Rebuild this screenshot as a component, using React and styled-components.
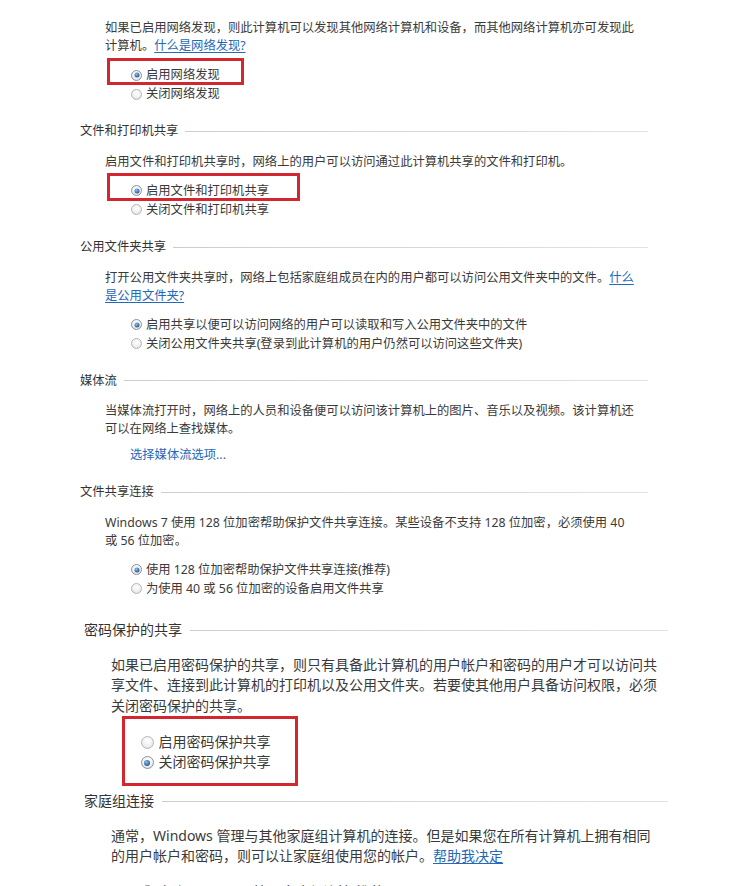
import React from "react";
import styled, { createGlobalStyle, ThemeProvider } from "styled-components";

const GlobalStyle = createGlobalStyle`
  html, body { margin: 0; padding: 0; background: #ffffff; }
  body {
    font-family: "Noto Sans", "Noto Sans CJK SC", sans-serif;
    color: #3a3a3a;
    -webkit-font-smoothing: antialiased;
  }
`;

const compact = {
  font: 12.3, line: 18, row: 19, left: 80, end: 648, bodyIndent: 25, bodyWidth: 530.5,
  optionIndent: 51, radio: 11, dot: 5, radioGap: 4, headToBody: 12.5, bodyToOptions: 10.5,
  linkSpace: 7, sectionGap: 16.5, top: 19, headerGap: 7,
};

const large = {
  font: 14, line: 20.5, row: 20, left: 84, end: 668, bodyIndent: 27, bodyWidth: 550,
  optionIndent: 56.5, radio: 13, dot: 6, radioGap: 5, headToBody: 14, bodyToOptions: 15,
  linkSpace: 11, sectionGap: 18.75, top: 22.25, headerGap: 8,
};

const Page = styled.main`
  width: 732px;
  height: 886px;
  overflow: hidden;
  background: #ffffff;
`;

const Group = styled.div`
  margin-left: ${(p) => p.theme.left}px;
  width: ${(p) => p.theme.end - p.theme.left}px;
  padding-top: ${(p) => p.theme.top}px;
  font-size: ${(p) => p.theme.font}px;
  line-height: ${(p) => p.theme.line}px;
`;

const Section = styled.section`
  & + & { margin-top: ${(p) => p.theme.sectionGap}px; }
`;

const Header = styled.h3`
  margin: 0 0 ${(p) => p.theme.headToBody}px 0;
  display: flex;
  align-items: center;
  gap: ${(p) => p.theme.headerGap}px;
  font-size: inherit;
  line-height: inherit;
  font-weight: normal;
  color: #333333;
  white-space: nowrap;
  &::after {
    content: "";
    flex: 1;
    height: 1px;
    background: linear-gradient(to right, #cdcdcd, #e2e2e2);
  }
`;

const Body = styled.p`
  margin: 0;
  padding-left: ${(p) => p.theme.bodyIndent}px;
  max-width: ${(p) => p.theme.bodyWidth}px;
  color: #3a3a3a;
`;

const Link = styled.a`
  color: #2468b8;
  text-decoration: ${(p) => (p.$plain ? "none" : "underline")};
  text-underline-offset: 2px;
  cursor: pointer;
`;

const LinkRow = styled.div`
  margin-top: ${(p) => p.theme.linkSpace}px;
  padding-left: ${(p) => p.theme.optionIndent - 1}px;
  height: ${(p) => p.theme.row}px;
  line-height: ${(p) => p.theme.row}px;
`;

const Options = styled.div`
  margin-top: ${(p) => (p.$space != null ? p.$space : p.theme.bodyToOptions)}px;
  padding-left: ${(p) => p.theme.optionIndent}px;
  display: flex;
  flex-direction: column;
  align-items: flex-start;
`;

const Mark = styled.div`
  position: relative;
  display: flex;
  flex-direction: column;
  &::after {
    content: "";
    position: absolute;
    top: ${(p) => -p.$out[0]}px;
    right: ${(p) => -p.$out[1]}px;
    bottom: ${(p) => -p.$out[2]}px;
    left: ${(p) => -p.$out[3]}px;
    border: 3px solid #d3262e;
    pointer-events: none;
  }
`;

const Option = styled.label`
  display: flex;
  align-items: center;
  gap: ${(p) => p.theme.radioGap}px;
  height: ${(p) => p.theme.row}px;
  white-space: nowrap;
  color: #3a3a3a;
`;

const Radio = styled.span`
  position: relative;
  flex: none;
  width: ${(p) => p.theme.radio}px;
  height: ${(p) => p.theme.radio}px;
  box-sizing: border-box;
  border-radius: 50%;
  border: 1px solid ${(p) => (p.$on ? "#8d9399" : "#b4b6b8")};
  background: radial-gradient(circle at 50% 35%, #ffffff 0%, #eef0f2 55%, #d4d6d8 100%);
  &::after {
    content: "";
    display: ${(p) => (p.$on ? "block" : "none")};
    position: absolute;
    left: 50%;
    top: 50%;
    width: ${(p) => p.theme.dot}px;
    height: ${(p) => p.theme.dot}px;
    transform: translate(-50%, -50%);
    border-radius: 50%;
    background: radial-gradient(circle at 40% 35%, #8fc0ec 0%, #3f78b8 50%, #1d3f6e 100%);
  }
`;

const Choice = ({ on, children }) => (
  <Option>
    <Radio $on={on} />
    <span>{children}</span>
  </Option>
);

export default function App() {
  return (
    <Page>
      <GlobalStyle />
      <ThemeProvider theme={compact}>
        <Group>
          <Section>
            <Body>
              如果已启用网络发现，则此计算机可以发现其他网络计算机和设备，而其他网络计算机亦可发现此计算机。
              <Link>什么是网络发现?</Link>
            </Body>
            <Options>
              <Mark $out={[7.5, 24, 0.5, 24]}>
                <Choice on>启用网络发现</Choice>
              </Mark>
              <Choice>关闭网络发现</Choice>
            </Options>
          </Section>

          <Section>
            <Header>文件和打印机共享</Header>
            <Body>启用文件和打印机共享时，网络上的用户可以访问通过此计算机共享的文件和打印机。</Body>
            <Options>
              <Mark $out={[8, 31, 0.5, 24]}>
                <Choice on>启用文件和打印机共享</Choice>
              </Mark>
              <Choice>关闭文件和打印机共享</Choice>
            </Options>
          </Section>

          <Section>
            <Header>公用文件夹共享</Header>
            <Body>
              打开公用文件夹共享时，网络上包括家庭组成员在内的用户都可以访问公用文件夹中的文件。
              <Link>什么是公用文件夹?</Link>
            </Body>
            <Options>
              <Choice on>启用共享以便可以访问网络的用户可以读取和写入公用文件夹中的文件</Choice>
              <Choice>关闭公用文件夹共享(登录到此计算机的用户仍然可以访问这些文件夹)</Choice>
            </Options>
          </Section>

          <Section>
            <Header>媒体流</Header>
            <Body>当媒体流打开时，网络上的人员和设备便可以访问该计算机上的图片、音乐以及视频。该计算机还可以在网络上查找媒体。</Body>
            <LinkRow>
              <Link $plain>选择媒体流选项...</Link>
            </LinkRow>
          </Section>

          <Section>
            <Header>文件共享连接</Header>
            <Body>Windows 7 使用 128 位加密帮助保护文件共享连接。某些设备不支持 128 位加密，必须使用 40 或 56 位加密。</Body>
            <Options>
              <Choice on>使用 128 位加密帮助保护文件共享连接(推荐)</Choice>
              <Choice>为使用 40 或 56 位加密的设备启用文件共享</Choice>
            </Options>
          </Section>
        </Group>
      </ThemeProvider>

      <ThemeProvider theme={large}>
        <Group>
          <Section>
            <Header>密码保护的共享</Header>
            <Body>如果已启用密码保护的共享，则只有具备此计算机的用户帐户和密码的用户才可以访问共享文件、连接到此计算机的打印机以及公用文件夹。若要使其他用户具备访问权限，必须关闭密码保护的共享。</Body>
            <Options $space={16.25}>
              <Mark $out={[17, 27.5, 13, 18.5]}>
                <Choice>启用密码保护共享</Choice>
                <Choice on>关闭密码保护共享</Choice>
              </Mark>
            </Options>
          </Section>

          <Section>
            <Header>家庭组连接</Header>
            <Body>
              通常，Windows 管理与其他家庭组计算机的连接。但是如果您在所有计算机上拥有相同的用户帐户和密码，则可以让家庭组使用您的帐户。
              <Link>帮助我决定</Link>
            </Body>
            <Options>
              <Choice on>允许 Windows 管理家庭组连接(推荐)</Choice>
              <Choice>使用用户帐户和密码连接到其他计算机</Choice>
            </Options>
          </Section>
        </Group>
      </ThemeProvider>
    </Page>
  );
}
